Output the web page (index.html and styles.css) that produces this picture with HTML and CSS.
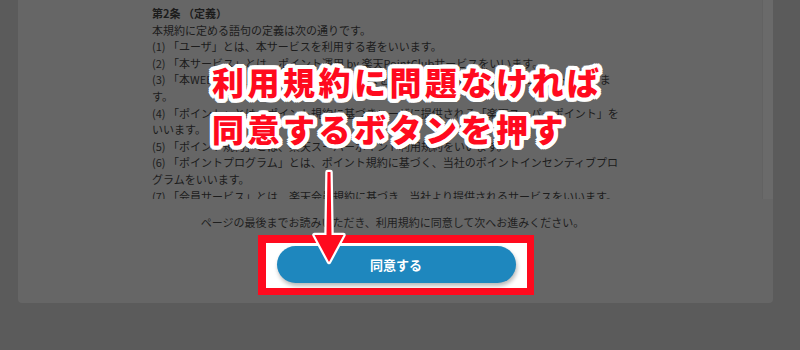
FILE: index.html
```html
<!DOCTYPE html>
<html lang="ja">
<head>
<meta charset="utf-8">
<title>利用規約</title>
<link rel="stylesheet" href="styles.css">
</head>
<body>
<div class="page">
  <div class="card">
    <div class="terms">
      <div class="terms-body">
        <p class="heading">第2条 （定義）</p>
        <p>本規約に定める語句の定義は次の通りです。</p>
        <p>(1) 「ユーザ」とは、本サービスを利用する者をいいます。</p>
        <p>(2) 「本サービス」とは、ポイント運用 by 楽天PointClubサービスをいいます。</p>
        <p>(3) 「本WEBサイト」とは、当社が本サービスを提供するために運営するWEBサイトをいいます。</p>
        <p>(4) 「ポイント」とは、ポイント規約に基づきユーザに提供される「楽天スーパーポイント」をいいます。</p>
        <p>(5) 「ポイント規約」とは、楽天スーパーポイント利用規約をいいます。</p>
        <p>(6) 「ポイントプログラム」とは、ポイント規約に基づく、当社のポイントインセンティブプログラムをいいます。</p>
        <p>(7) 「会員サービス」とは、楽天会員規約に基づき、当社より提供されるサービスをいいます。</p>
      </div>
      <div class="track"></div>
    </div>
    <p class="notice">ページの最後までお読みいただき、利用規約に同意して次へお進みください。</p>
    <div class="frame">
      <button class="agree" type="button">同意する</button>
    </div>
  </div>

  <div class="callout">
    <p>利用規約に問題なければ</p>
    <p>同意するボタンを押す</p>
  </div>
  <svg class="arrow" width="50" height="105" viewBox="0 0 50 105" aria-hidden="true">
    <polygon points="22.5,7 25.5,7 26.5,70 38.5,70 24,97 9.5,70 21.5,70" fill="#ff0a1e" stroke="#ffffff" stroke-width="4.5" stroke-linejoin="round" paint-order="stroke fill"/>
  </svg>
</div>
</body>
</html>
```
FILE: styles.css
```css
* { box-sizing: border-box; }

html, body {
  margin: 0;
  padding: 0;
}

body {
  width: 800px;
  height: 350px;
  overflow: hidden;
  background: #5b5b5b;
  font-family: "Noto Sans CJK JP", "Noto Sans", sans-serif;
  color: #1c1c1c;
}

.page {
  position: relative;
  width: 800px;
  height: 350px;
  padding: 0 27px 0 18px;
}

.card {
  display: flex;
  flex-direction: column;
  align-items: center;
  height: 303px;
  background: #666666;
  border-radius: 0 0 4px 4px;
}

.terms {
  display: flex;
  align-self: stretch;
  height: 199px;
  overflow: hidden;
}

.terms-body {
  flex: 1;
  padding: 5px 0 0 134px;
  font-size: 11px;
  line-height: 16.6px;
}

.terms-body p {
  margin: 0;
  width: 471px;
}

.terms-body .heading {
  font-weight: 700;
}

.track {
  width: 11px;
  background: #6a6a6a;
  border-left: 1px solid #626262;
}

.notice {
  margin: 15px 0 0 -6px;
  font-size: 11px;
  line-height: 16.5px;
  color: #1f1f1f;
}

.frame {
  margin-top: 4.5px;
  padding: 3px 11px 5px;
  background: #ffffff;
  border-style: solid;
  border-color: #ff0a1e;
  border-width: 8px 7px 7px 8px;
}

.agree {
  display: block;
  width: 239px;
  height: 37px;
  border: 0;
  border-radius: 19px;
  background: #1e87be;
  color: #ffffff;
  font-family: "Noto Sans CJK JP", sans-serif;
  font-size: 13px;
  font-weight: 700;
  box-shadow: 1px 3px 4px rgba(0, 0, 0, 0.28);
}

.callout {
  position: absolute;
  left: 212px;
  top: 58px;
  color: #ff0a1e;
  font-size: 32px;
  font-weight: 900;
  letter-spacing: 3.5px;
  line-height: 47px;
  text-shadow:
    4px 0 0 #fff, -4px 0 0 #fff, 0 4px 0 #fff, 0 -4px 0 #fff,
    3px 3px 0 #fff, -3px 3px 0 #fff, 3px -3px 0 #fff, -3px -3px 0 #fff,
    4px 2px 0 #fff, -4px 2px 0 #fff, 4px -2px 0 #fff, -4px -2px 0 #fff,
    2px 4px 0 #fff, -2px 4px 0 #fff, 2px -4px 0 #fff, -2px -4px 0 #fff,
    1px 1px 3px rgba(0, 0, 0, 0.3);
}

.callout p {
  margin: 0;
  white-space: nowrap;
}

.arrow {
  position: absolute;
  left: 305px;
  top: 165px;
}
```
